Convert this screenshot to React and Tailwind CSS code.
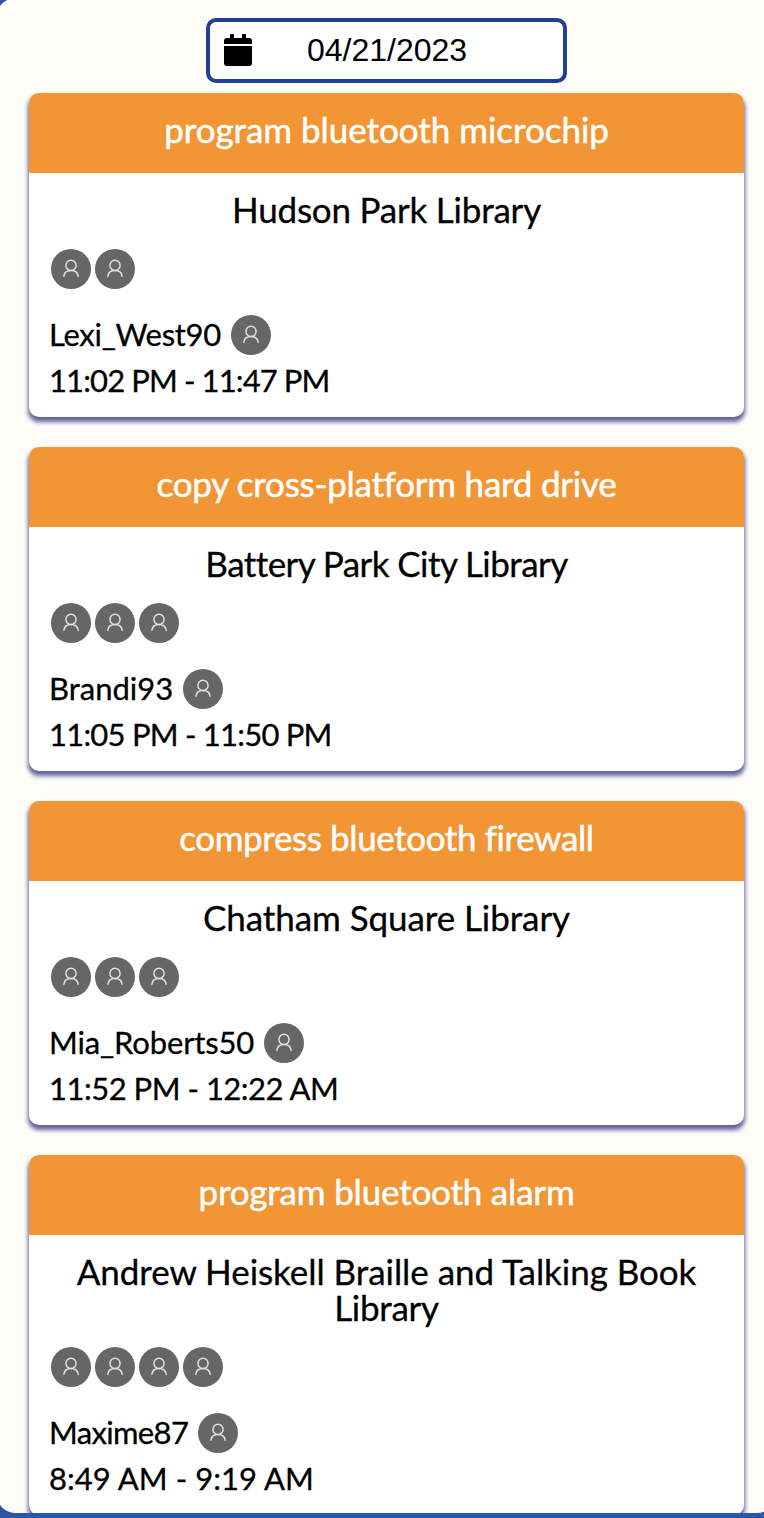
const events = [
  {
    title: ['program bluetooth microchip', 'tracking-[-0.04px]'],
    place: [['Hudson Park Library', 'tracking-[-0.21px]']],
    guests: 2,
    host: ['Lexi_West90', 'tracking-[-0.3px]'],
    time: ['11:02 PM - 11:47 PM', 'tracking-[-0.89px]'],
  },
  {
    title: ['copy cross-platform hard drive', 'tracking-[-0.25px]'],
    place: [['Battery Park City Library', 'tracking-[-0.56px]']],
    guests: 3,
    host: ['Brandi93', 'tracking-[0px]'],
    time: ['11:05 PM - 11:50 PM', 'tracking-[-0.78px]'],
  },
  {
    title: ['compress bluetooth firewall', 'tracking-[-0.4px]'],
    place: [['Chatham Square Library', 'tracking-[-0.08px]']],
    guests: 3,
    host: ['Mia_Roberts50', 'tracking-[-0.15px]'],
    time: ['11:52 PM - 12:22 AM', 'tracking-[-0.5px]'],
  },
  {
    title: ['program bluetooth alarm', 'tracking-[-0.19px]'],
    place: [
      ['Andrew Heiskell Braille and Talking Book', 'tracking-[-0.05px]'],
      ['Library', 'tracking-[-0.27px]'],
    ],
    guests: 4,
    host: ['Maxime87', 'tracking-[-0.65px]'],
    time: ['8:49 AM - 9:19 AM', 'tracking-[0.05px]'],
  },
];

function Avatar() {
  return (
    <span className="block size-10 shrink-0 rounded-full bg-[#666666]">
      <svg viewBox="0 0 40 40" className="block size-10" fill="none" stroke="#e4e4e4" strokeWidth="1.4" strokeLinecap="round">
        <circle cx="20" cy="16.4" r="5.1" />
        <path d="M12.800 27.300c.5-3.400 3.400-5.800 7.200-5.800s6.700 2.400 7.200 5.800" />
      </svg>
    </span>
  );
}

function CalendarIcon() {
  return (
    <svg viewBox="0 0 28 32" className="-mt-[2px] h-8 w-7" fill="#000">
      <path d="M0 12h28v17a3 3 0 0 1-3 3H3a3 3 0 0 1-3-3zM28 10H0V7a3 3 0 0 1 3-3h3V1a1 1 0 0 1 1-1h2a1 1 0 0 1 1 1v3h8V1a1 1 0 0 1 1-1h2a1 1 0 0 1 1 1v3h3a3 3 0 0 1 3 3z" />
    </svg>
  );
}

function EventCard({ title, place, guests, host, time }) {
  return (
    <article className="shrink-0 overflow-hidden rounded-[10px] bg-white shadow-[0_4px_4px_1px_#62639f]">
      <h2 className="h-20 bg-[#f29535] pt-[18px] text-center text-[35px] leading-9 font-normal whitespace-nowrap text-white [-webkit-text-stroke:0.5px_white]">
        <span className={title[1]}>{title[0]}</span>
      </h2>
      <div className="px-5 pt-[18px] pb-[18px]">
        <h3 className="text-center text-[35px] leading-9 font-normal whitespace-nowrap [-webkit-text-stroke:0.3px_black]">
          {place.map(([line, tracking]) => (
            <span key={line} className={`block ${tracking}`}>{line}</span>
          ))}
        </h3>
        <div className="mt-[22px] flex gap-1 pl-[2px]">
          {Array.from({ length: guests }, (_, i) => <Avatar key={i} />)}
        </div>
        <div className="mt-[26px] flex h-10 items-center gap-[10px]">
          <span className={`-mt-[2px] text-[31px] leading-10 whitespace-nowrap [-webkit-text-stroke:0.3px_black] ${host[1]}`}>{host[0]}</span>
          <Avatar />
        </div>
        <p className="mt-[3px] h-[41px] text-[31px] leading-[44px] whitespace-nowrap [-webkit-text-stroke:0.3px_black]">
          <span className={time[1]}>{time[0]}</span>
        </p>
      </div>
    </article>
  );
}

export default function App() {
  return (
    <div className="h-[1518px] w-[764px] overflow-hidden bg-[#2956a8] font-[Lato,sans-serif] text-black">
      <main className="-mt-[2px] -ml-1 flex h-[1515px] w-[781px] flex-col overflow-hidden rounded-[20px] bg-[#fdfcf7] px-[33px] pt-5">
        <div className="flex h-[65px] w-[361px] shrink-0 items-center self-center rounded-[10px] border-4 border-[#213f94] bg-white pl-[14px]">
          <CalendarIcon />
          <span className="-mt-[2px] ml-[55px] font-['Liberation_Sans',Arial,sans-serif] text-[32px] leading-9">04/21/2023</span>
        </div>
        <div className="mt-[10px] flex flex-col gap-[30px]">
          {events.map((event) => <EventCard key={event.title[0]} {...event} />)}
        </div>
      </main>
    </div>
  );
}
